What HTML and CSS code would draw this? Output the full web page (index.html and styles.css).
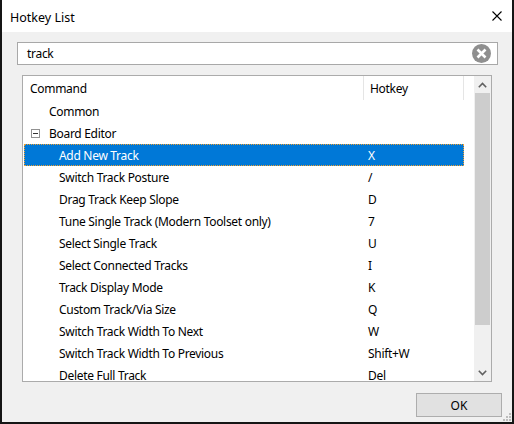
FILE: index.html
```html
<!DOCTYPE html>
<html>
<head>
<meta charset="utf-8">
<link rel="stylesheet" href="styles.css">
</head>
<body>
<div class="window">
  <div class="titlebar">
    <span class="title">Hotkey List</span>
    <svg class="close" width="10" height="10" viewBox="0 0 10 10"><path d="M0.5 0.5L9.5 9.5M9.5 0.5L0.5 9.5" stroke="#000" stroke-width="1.1" fill="none"/></svg>
  </div>
  <div class="body">
    <div class="search">
      <span class="search-text">track</span>
      <svg class="clear" width="19" height="19" viewBox="0 0 19 19"><circle cx="9.5" cy="9.5" r="9.5" fill="#8f8f8f"/><path d="M5.5 5.5L13.5 13.5M13.5 5.5L5.5 13.5" stroke="#fff" stroke-width="2.6" fill="none"/></svg>
    </div>
    <div class="list">
      <div class="content">
        <div class="header">
          <div class="hcell hcmd">Command</div>
          <div class="hcell hkey">Hotkey</div>
          <div class="hrest"></div>
        </div>
        <div class="row"><div class="cmd lvl1">Common</div><div class="key"></div></div>
        <div class="row"><div class="cmd lvl1 group"><span class="exp"><span class="minus"></span></span>Board Editor</div><div class="key"></div></div>
        <div class="row selected"><div class="cmd lvl2">Add New Track</div><div class="key">X</div></div>
        <div class="row"><div class="cmd lvl2">Switch Track Posture</div><div class="key">/</div></div>
        <div class="row"><div class="cmd lvl2">Drag Track Keep Slope</div><div class="key">D</div></div>
        <div class="row"><div class="cmd lvl2">Tune Single Track (Modern Toolset only)</div><div class="key">7</div></div>
        <div class="row"><div class="cmd lvl2">Select Single Track</div><div class="key">U</div></div>
        <div class="row"><div class="cmd lvl2">Select Connected Tracks</div><div class="key">I</div></div>
        <div class="row"><div class="cmd lvl2">Track Display Mode</div><div class="key">K</div></div>
        <div class="row"><div class="cmd lvl2">Custom Track/Via Size</div><div class="key">Q</div></div>
        <div class="row"><div class="cmd lvl2">Switch Track Width To Next</div><div class="key">W</div></div>
        <div class="row"><div class="cmd lvl2">Switch Track Width To Previous</div><div class="key">Shift+W</div></div>
        <div class="row"><div class="cmd lvl2">Delete Full Track</div><div class="key">Del</div></div>
      </div>
      <div class="scrollbar">
        <div class="sb-btn"><svg width="9" height="6" viewBox="0 0 9 6"><path d="M0.8 5.2L4.5 1.5L8.2 5.2" stroke="#606060" stroke-width="1.6" fill="none"/></svg></div>
        <div class="sb-thumb"></div>
        <div class="sb-track"></div>
        <div class="sb-btn"><svg width="9" height="6" viewBox="0 0 9 6"><path d="M0.8 0.8L4.5 4.5L8.2 0.8" stroke="#606060" stroke-width="1.6" fill="none"/></svg></div>
      </div>
    </div>
    <div class="footer">
      <button class="ok">OK</button>
    </div>
    <svg class="grip" width="9" height="9" viewBox="0 0 9 9" fill="#bcbcbc">
      <rect x="7" y="1" width="2" height="2"/>
      <rect x="4" y="4" width="2" height="2"/><rect x="7" y="4" width="2" height="2"/>
      <rect x="1" y="7" width="2" height="2"/><rect x="4" y="7" width="2" height="2"/><rect x="7" y="7" width="2" height="2"/>
    </svg>
  </div>
</div>
</body>
</html>
```
FILE: styles.css
```css
html, body {
  margin: 0;
  padding: 0;
}
body {
  width: 514px;
  height: 424px;
  background: #151515;
  font-family: "Noto Sans", "Segoe UI", sans-serif;
  font-size: 12px;
  letter-spacing: -0.3px;
  color: #000;
  overflow: hidden;
}
.window {
  margin-left: 2px;
  width: 510px;
  height: 422px;
  background: #f0f0f0;
  display: flex;
  flex-direction: column;
}
.titlebar {
  height: 32px;
  background: #fff;
  display: flex;
  align-items: center;
  justify-content: space-between;
  padding: 0 10px 0 8px;
  flex-shrink: 0;
}
.title {
  font-size: 12.5px;
  letter-spacing: 0;
  margin-top: 3px;
}
.close {
  display: block;
}
.body {
  flex: 1;
  display: flex;
  flex-direction: column;
  position: relative;
}
.search {
  margin: 10px 0 0 15px;
  height: 21px;
  border: 1px solid #a8a8a8;
  background: #fff;
  display: flex;
  align-items: center;
  justify-content: space-between;
  padding: 0 6px 0 9px;
  box-sizing: content-box;
  width: 464px;
}
.search-text {
  margin-top: -1px;
}
.clear {
  display: block;
}
.list {
  margin: 10px 0 0 20px;
  width: 468px;
  height: 305px;
  border: 1px solid #ababab;
  background: #fff;
  display: flex;
  overflow: hidden;
}
.content {
  flex: 1;
  display: flex;
  flex-direction: column;
  overflow: hidden;
}
.header {
  height: 24px;
  display: flex;
  flex-shrink: 0;
}
.hcell {
  display: flex;
  align-items: center;
  padding-left: 7px;
  box-sizing: border-box;
  border-right: 1px solid #e5e5e5;
}
.hcmd {
  width: 341px;
}
.hkey {
  width: 100px;
  padding-left: 6px;
}
.hrest {
  flex: 1;
}
.row {
  height: 22px;
  display: flex;
  align-items: center;
  flex-shrink: 0;
  width: 440px;
  margin-left: 1px;
  box-sizing: border-box;
}
.row.selected {
  background: #0078d7;
  color: #fff;
  outline: 1px dotted #f0a030;
  outline-offset: -1px;
}
.cmd {
  width: 343px;
  box-sizing: border-box;
  display: flex;
  align-items: center;
}
.lvl1 {
  padding-left: 25px;
}
.lvl1.group {
  padding-left: 7px;
}
.lvl2 {
  padding-left: 35px;
}
.key {
  padding-left: 1px;
}
.exp {
  width: 7px;
  height: 7px;
  border: 1px solid #919191;
  margin-right: 9px;
  display: flex;
  align-items: center;
  justify-content: center;
}
.minus {
  width: 5px;
  height: 1px;
  background: #333;
}
.scrollbar {
  width: 17px;
  background: #f0f0f0;
  display: flex;
  flex-direction: column;
  flex-shrink: 0;
}
.sb-btn {
  height: 17px;
  display: flex;
  align-items: center;
  justify-content: center;
}
.sb-thumb {
  height: 232px;
  background: #cdcdcd;
  margin: 0 1px;
}
.sb-track {
  flex: 1;
}
.footer {
  display: flex;
  justify-content: flex-end;
  padding: 11px 10px 0 0;
}
.ok {
  width: 86px;
  height: 24px;
  background: #e1e1e1;
  border: 1px solid #adadad;
  font-family: inherit;
  font-size: 12px;
  color: #000;
  padding: 0;
}
.grip {
  position: absolute;
  right: 1px;
  bottom: 1px;
}
```
